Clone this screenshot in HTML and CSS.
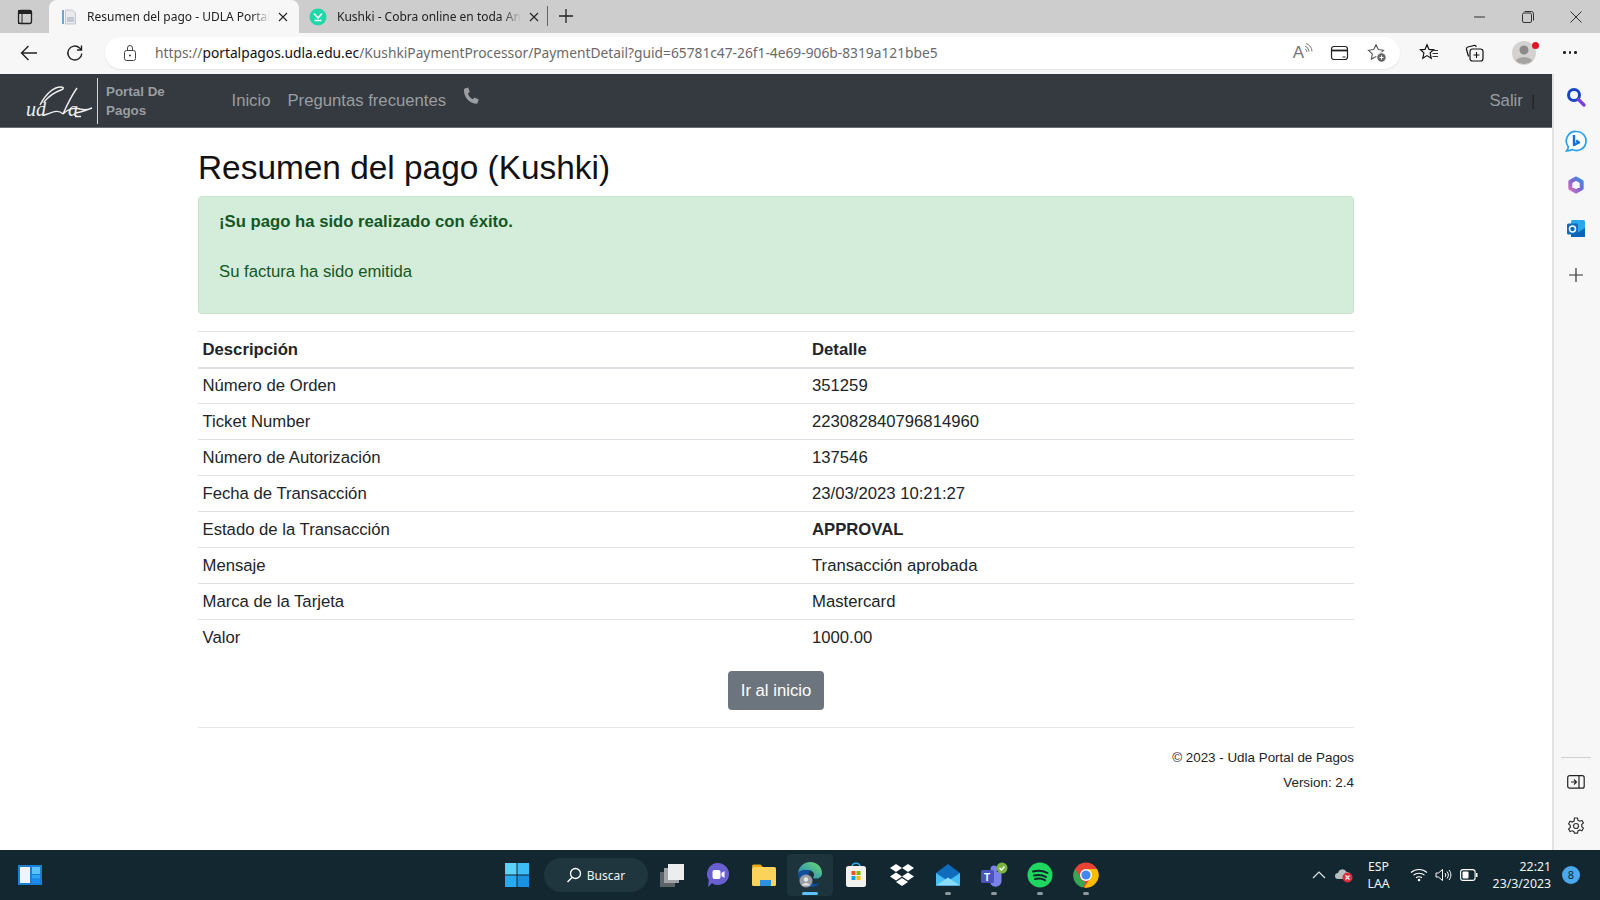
FILE: index.html
```html
<!DOCTYPE html>
<html lang="es">
<head>
    <meta charset="UTF-8">
    <title>Resumen del pago - UDLA Portal de Pagos</title>
    <link rel="stylesheet" href="styles.css">
</head>
<body>
    <!-- browser tabs -->
    <div class="tabstrip">
        <div class="tab-toggle">
            <svg width="16" height="16" viewBox="0 0 16 16"><rect x="1.500" y="1.500" width="13" height="13" rx="2" fill="none" stroke="#222" stroke-width="1.300"/><rect x="1.500" y="1.500" width="13" height="3.500" fill="#222"/><rect x="1.500" y="1.500" width="3.500" height="13" fill="none" stroke="#222" stroke-width="1"/></svg>
        </div>
        <div class="tab tab-active">
            <svg class="favicon" width="16" height="16" viewBox="0 0 16 16"><rect x="1" y="1" width="2" height="14" fill="#6aa6d8"/><path d="M4.500 1h7l3 3v11h-10z" fill="#e9e9ee" stroke="#b9bcc6" stroke-width=".8"/><rect x="6" y="8" width="7" height="5" fill="#c4c8d2"/></svg>
            <span class="tab-title">Resumen del pago - UDLA Portal</span>
            <svg class="tab-close" width="10" height="10" viewBox="0 0 10 10"><path d="M1 1l8 8M9 1l-8 8" stroke="#222" stroke-width="1.100"/></svg>
        </div>
        <div class="tab">
            <svg class="favicon" width="18" height="18" viewBox="0 0 18 18"><circle cx="9" cy="9" r="8.500" fill="#1ed8a8"/><path d="M5 5.500L9 10l4-4.500M5.500 12.500h7" fill="none" stroke="#fff" stroke-width="1.600"/></svg>
            <span class="tab-title">Kushki - Cobra online en toda An</span>
            <svg class="tab-close" width="10" height="10" viewBox="0 0 10 10"><path d="M1 1l8 8M9 1l-8 8" stroke="#222" stroke-width="1.100"/></svg>
        </div>
        <div class="tab-sep"></div>
        <svg class="tab-new" width="16" height="16" viewBox="0 0 16 16"><path d="M8 1v14M1 8h14" stroke="#222" stroke-width="1.300"/></svg>
        <div class="window-btns">
            <svg width="12" height="12" viewBox="0 0 12 12"><path d="M0 6h11" stroke="#333" stroke-width="1"/></svg>
            <svg width="12" height="12" viewBox="0 0 12 12"><rect x=".5" y="2" width="9" height="9.500" rx="1.500" fill="none" stroke="#333"/><path d="M2.500 .5h7a2 2 0 0 1 2 2v7" fill="none" stroke="#333"/></svg>
            <svg width="12" height="12" viewBox="0 0 12 12"><path d="M.5 .5l11 11M11.500 .5l-11 11" stroke="#333" stroke-width="1"/></svg>
        </div>
    </div>

    <!-- address bar -->
    <div class="toolbar">
        <svg class="tool-back" width="20" height="20" viewBox="0 0 20 20"><path d="M18 10H2.500M9.500 3l-7 7 7 7" fill="none" stroke="#222" stroke-width="1.400"/></svg>
        <svg class="tool-reload" width="20" height="20" viewBox="0 0 20 20"><path d="M16.800 10.500a7 7 0 1 1-2.200-5.600L16.500 7M16.500 2.500V7H12" fill="none" stroke="#222" stroke-width="1.400"/></svg>
        <div class="address">
            <svg class="lock" width="16" height="18" viewBox="0 0 16 18"><rect x="2.500" y="6.500" width="11" height="10" rx="2" fill="none" stroke="#444"/><path d="M5.500 6.500V4a2.500 2.500 0 0 1 5 0v2.500" fill="none" stroke="#444"/><circle cx="8" cy="11.500" r="1" fill="#444"/></svg>
            <span class="url">https://<b>portalpagos.udla.edu.ec</b>/KushkiPaymentProcessor/PaymentDetail?guid=65781c47-26f1-4e69-906b-8319a121bbe5</span>
            <div class="address-icons">
                <span class="read-aloud">A<svg width="9" height="12" viewBox="0 0 9 12"><path d="M1 6a3 3 0 0 1 2 3M1 3a6 6 0 0 1 4 5.500M2 .5a9 9 0 0 1 6 8" fill="none" stroke="#777"/></svg></span>
                <svg width="20" height="16" viewBox="0 0 20 16"><rect x="1.500" y="1.500" width="16" height="13" rx="2.500" fill="none" stroke="#222" stroke-width="1.200"/><path d="M1.500 5.500h16" stroke="#222" stroke-width="1.800"/><path d="M12.500 12h3" stroke="#222"/></svg>
                <svg width="20" height="20" viewBox="0 0 20 20"><path d="M9 1.800l2.300 4.800 5.200.7-3.800 3.600.9 5.200L9 13.600l-4.600 2.500.9-5.200L1.500 7.300l5.200-.7z" fill="none" stroke="#555" stroke-width="1.100"/><circle cx="14.500" cy="14.500" r="5.200" fill="#fff"/><circle cx="14.500" cy="14.500" r="4.200" fill="#666"/><path d="M14.500 12.500v4M12.500 14.500h4" stroke="#fff"/></svg>
            </div>
        </div>
        <div class="tool-icons">
            <svg width="20" height="20" viewBox="0 0 20 20"><path d="M8 1.800l2 4.600 4.600.4-3.500 3.100 1.100 5.300L8 12.600l-4.200 2.600 1.100-5.300L1.400 6.800 6 6.400z" fill="none" stroke="#111" stroke-width="1.200"/><path d="M13.500 7.500H19M13.500 10.500H19M13.500 13.500H19" stroke="#333"/></svg>
            <svg width="20" height="20" viewBox="0 0 20 20"><path d="M3.500 13.500L1.500 6.500a2 2 0 0 1 1.400-2.500l6-1.500a2 2 0 0 1 2.400 1.400" fill="none" stroke="#111" stroke-width="1.200"/><rect x="5" y="6" width="13" height="12" rx="2.500" fill="none" stroke="#111" stroke-width="1.200"/><path d="M11.500 9v6M8.500 12h6" stroke="#111" stroke-width="1.100"/></svg>
            <div class="profile">
                <svg width="24" height="24" viewBox="0 0 24 24"><circle cx="12" cy="12" r="12" fill="#d3d2d0"/><circle cx="12" cy="9" r="4.500" fill="#8c8a88"/><path d="M4 20c1-5 15-5 16 0a12 12 0 0 1-16 0z" fill="#a5a3a1"/></svg>
                <span class="profile-dot"></span>
            </div>
            <span class="more-dots"><i></i><i></i><i></i></span>
        </div>
    </div>

    <div class="window">
        <div class="page">
            <nav class="navbar">
                <a class="brand">
                    <svg class="brand-logo" width="68" height="36" viewBox="0 0 68 36">
                        <text x="1" y="33" class="brand-script">ud</text>
                        <text x="43" y="33" class="brand-script">a</text>
                        <path d="M15 22C20 12 28 4 36 4c3 0 3 2 0 3-6 2-12 6-17 12M38 31C42 22 47 12 52 5M19 32c6-1 13-7 19-1M38 31c4-5 12-7 17-5 4 1 8 1 12-1-5 2-10 4-16 5M50 33.500h6" fill="none" stroke="#eeeeee" stroke-width="1.400"/>
                    </svg>
                    <span class="brand-text">Portal De<br>Pagos</span>
                </a>
                <a class="nav-link">Inicio</a>
                <a class="nav-link">Preguntas frecuentes</a>
                <svg class="nav-phone" width="20" height="20" viewBox="0 0 20 20"><path d="M4.500 1.200l2.700-.700 1.600 4.300-1.900 1.600c.8 2.500 2.500 4.600 4.900 5.900l1.800-1.800 4.100 2-.9 3c-.3.900-1 1.300-1.900 1.200C8 16.200 2.800 10 2.900 3.100c0-.9.600-1.600 1.600-1.900z" fill="#9a9da1"/></svg>
                <a class="nav-link nav-right">Salir</a>
                <span class="nav-bar-sep">|</span>
            </nav>

            <main class="container">
                <h1>Resumen del pago (Kushki)</h1>
                <div class="alert">
                    <p class="alert-title">¡Su pago ha sido realizado con éxito.</p>
                    <p>Su factura ha sido emitida</p>
                </div>
                <table class="detail">
                    <thead>
                        <tr><th class="col-desc">Descripción</th><th>Detalle</th></tr>
                    </thead>
                    <tbody>
                        <tr><td>Número de Orden</td><td>351259</td></tr>
                        <tr><td>Ticket Number</td><td>223082840796814960</td></tr>
                        <tr><td>Número de Autorización</td><td>137546</td></tr>
                        <tr><td>Fecha de Transacción</td><td>23/03/2023 10:21:27</td></tr>
                        <tr><td>Estado de la Transacción</td><td><b>APPROVAL</b></td></tr>
                        <tr><td>Mensaje</td><td>Transacción aprobada</td></tr>
                        <tr><td>Marca de la Tarjeta</td><td>Mastercard</td></tr>
                        <tr><td>Valor</td><td>1000.00</td></tr>
                    </tbody>
                </table>
                <div class="actions"><a class="btn">Ir al inicio</a></div>
                <footer class="footer">
                    <p>© 2023 - Udla Portal de Pagos</p>
                    <p>Version: 2.4</p>
                </footer>
            </main>
        </div>

        <!-- edge sidebar -->
        <aside class="sidebar">
            <div class="side-icon"><svg width="20" height="20" viewBox="0 0 20 20"><circle cx="8" cy="8" r="5.500" fill="none" stroke="#1746c4" stroke-width="3"/><path d="M12.500 12.500l5.500 5.500" stroke="#7a3fe0" stroke-width="3.200" stroke-linecap="round"/></svg></div>
            <div class="side-icon"><svg width="22" height="22" viewBox="0 0 22 22"><path d="M11.500 1.500a9.500 9.500 0 1 1-4 18.100c-1.800.9-3.700 1.200-5.800 1.200.9-1 1.500-2.400 1.600-4.100A9.500 9.500 0 0 1 11.500 1.500z" fill="#fff" stroke="#2a9fe8" stroke-width="1.700"/><path d="M9 5v10l5-2.500-2.800-2" fill="none" stroke="#1570d6" stroke-width="2.400" stroke-linejoin="round"/></svg></div>
            <div class="side-icon"><svg width="20" height="20" viewBox="0 0 20 20"><defs><linearGradient id="officeRing" x1="1" y1="0" x2="0" y2="1"><stop offset="0" stop-color="#3f8fe0"/><stop offset=".5" stop-color="#7c66d8"/><stop offset="1" stop-color="#d86fc0"/></linearGradient></defs><path d="M10 3.500l5.700 3.300v6.400L10 16.500l-5.700-3.300V6.800z" fill="none" stroke="url(#officeRing)" stroke-width="4" stroke-linejoin="round"/></svg></div>
            <div class="side-icon"><svg width="20" height="20" viewBox="0 0 20 20"><rect x="5" y="1" width="14" height="17" rx="1.500" fill="#28a8ea"/><path d="M5 9l7 4.500L19 9v9H5z" fill="#0a64b8"/><rect x="1" y="4.500" width="11" height="11" rx="1.500" fill="#0f6cbd"/><circle cx="6.500" cy="10" r="3" fill="none" stroke="#fff" stroke-width="1.500"/></svg></div>
            <div class="side-icon side-add"><svg width="14" height="14" viewBox="0 0 14 14"><path d="M7 0v14M0 7h14" stroke="#333" stroke-width="1.200"/></svg></div>
            <div class="sidebar-bottom">
                <div class="sidebar-rule"></div>
                <div class="side-icon"><svg width="18" height="14" viewBox="0 0 18 14"><rect x=".7" y=".7" width="16.500" height="12.500" rx="2" fill="none" stroke="#222" stroke-width="1.200"/><path d="M12 1v12" stroke="#222" stroke-width="1.200"/><path d="M4 7h5M7 4.500L9.500 7 7 9.500" fill="none" stroke="#222" stroke-width="1.100"/></svg></div>
                <div class="side-icon"><svg width="18" height="18" viewBox="0 0 18 18"><circle cx="9" cy="9" r="2.500" fill="none" stroke="#333" stroke-width="1.200"/><path d="M7.500 1h3l.5 2.300 1.700.9 2.200-.8 1.500 2.600-1.700 1.600v2l1.700 1.600-1.500 2.600-2.200-.8-1.700.9-.5 2.300h-3L7 14.700l-1.700-.9-2.200.8-1.500-2.600 1.700-1.600v-2L1.600 6.800l1.500-2.600 2.200.8L7 4.100z" fill="none" stroke="#333" stroke-width="1.200"/></svg></div>
            </div>
        </aside>
    </div>

    <!-- windows taskbar -->
    <div class="taskbar">
        <div class="task-left">
            <svg width="26" height="22" viewBox="0 0 26 22"><rect x="1" y="1" width="24" height="20" fill="#1a7fd6"/><rect x="3" y="3" width="10" height="16" fill="#f0f4fa"/><rect x="15" y="3" width="8" height="7" fill="#5cc1ff"/><rect x="15" y="11" width="8" height="3.500" fill="#2ea2f5"/><rect x="15" y="15.500" width="8" height="3.500" fill="#1a8cf0"/></svg>
        </div>
        <div class="task-center">
            <div class="task-icon"><svg width="24" height="24" viewBox="0 0 24 24"><rect x="0" y="0" width="11.500" height="11.500" fill="#5fd0f8"/><rect x="12.500" y="0" width="11.500" height="11.500" fill="#3dbdf5"/><rect x="0" y="12.500" width="11.500" height="11.500" fill="#2ba8ee"/><rect x="12.500" y="12.500" width="11.500" height="11.500" fill="#1a90e0"/></svg></div>
            <div class="task-search">
                <svg width="16" height="16" viewBox="0 0 16 16"><circle cx="9.500" cy="6.500" r="5" fill="none" stroke="#fff" stroke-width="1.300"/><path d="M6 10.500L1.500 15" stroke="#fff" stroke-width="1.500"/></svg>
                Buscar
            </div>
            <div class="task-icon"><svg width="26" height="26" viewBox="0 0 26 26"><rect x="1" y="10" width="15" height="15" fill="#5d6468"/><rect x="5" y="6" width="15" height="15" fill="#9fa3a6"/><rect x="9" y="2" width="16" height="16" fill="#eceded"/></svg></div>
            <div class="task-icon"><svg width="24" height="26" viewBox="0 0 24 26"><path d="M12 1a11 11 0 1 1-6 20.200L2 25l.8-7A11 11 0 0 1 12 1z" fill="#6a5fd0"/><rect x="6.500" y="8" width="8" height="9" rx="2" fill="#fff"/><path d="M15.500 11l3-2v7l-3-2z" fill="#fff"/></svg></div>
            <div class="task-icon"><svg width="26" height="24" viewBox="0 0 26 24"><path d="M1 3a1.500 1.500 0 0 1 1.500-1.500h7l3 3H1z" fill="#e8a818"/><rect x="1" y="4" width="24" height="19" rx="1.500" fill="#fcd35a"/><rect x="9" y="17" width="11" height="6" fill="#2d8fe0"/></svg></div>
            <div class="task-icon task-active">
                <svg width="26" height="28" viewBox="0 0 26 28"><defs><linearGradient id="edgeTop" x1="0" y1="1" x2="1" y2="0"><stop offset="0" stop-color="#1a7fd0"/><stop offset="1" stop-color="#6fdc6a"/></linearGradient></defs><path d="M1 12C2 5 7 1 13.500 1 20 1 25 6 25 12c0 4-3 5.500-6 5.500-2 0-3-.5-3-1 2-1.500 1.500-6-3-7C8 8.500 3 9.500 1 12z" fill="url(#edgeTop)"/><path d="M1 12c0 8 5 14 13 14 4 0 7-2 9-4-5 2-12 1-12-5 0-3 1-6 3-7.500C9 8.500 3 9.500 1 12z" fill="#0f4f9e"/><circle cx="9" cy="20" r="6.500" fill="#9a9ea4"/><circle cx="9" cy="18.500" r="2.200" fill="#e4e4e4"/><path d="M5 24.500c.5-3.500 7.500-3.500 8 0z" fill="#e4e4e4"/></svg>
                <span class="task-underline"></span>
            </div>
            <div class="task-icon"><svg width="22" height="26" viewBox="0 0 22 26"><path d="M7 5c0-5 8-5 8 0" fill="none" stroke="#2ba8ee" stroke-width="1.500"/><rect x="1" y="4" width="20" height="21" rx="2.500" fill="#f4f2ee"/><rect x="6.500" y="9" width="4" height="4" fill="#f25022"/><rect x="11.500" y="9" width="4" height="4" fill="#7fba00"/><rect x="6.500" y="14" width="4" height="4" fill="#00a4ef"/><rect x="11.500" y="14" width="4" height="4" fill="#ffb900"/></svg></div>
            <div class="task-icon"><svg width="26" height="24" viewBox="0 0 26 24"><path d="M7 1l6 4-6 4-6-4zM19 1l6 4-6 4-6-4zM7 9.500l6 4-6 4-6-4zM19 9.500l6 4-6 4-6-4zM7 19l6-4 6 4-6 4z" fill="#fff"/></svg></div>
            <div class="task-icon"><svg width="26" height="24" viewBox="0 0 26 24"><path d="M13 1l12 9v12.500H1V10z" fill="#0f6cbd"/><path d="M1 10l12 8 12-8v12.500H1z" fill="#47bdf5"/><path d="M1 22.500l12-8 12 8z" fill="#8adcfb"/></svg><span class="task-pip"></span></div>
            <div class="task-icon"><svg width="28" height="26" viewBox="0 0 28 26"><circle cx="14" cy="7" r="3.500" fill="#7b83eb"/><path d="M11 10h9a1.500 1.500 0 0 1 1.500 1.500V19a6 6 0 0 1-11 3z" fill="#7b83eb"/><rect x="1" y="8" width="13" height="13" rx="1.500" fill="#4b53bc"/><text x="4" y="18.500" class="teams-t">T</text><circle cx="22" cy="6" r="5.500" fill="#7cb342"/><path d="M19.500 6l2 2 3-3.500" fill="none" stroke="#fff" stroke-width="1.300"/></svg><span class="task-pip"></span></div>
            <div class="task-icon"><svg width="26" height="26" viewBox="0 0 26 26"><circle cx="13" cy="13" r="12.500" fill="#1ed760"/><path d="M6 9.500c5-1.500 10-1 14.500 1.500M7 13.500c4-1 8.500-.7 12 1.500M8 17c3.500-.7 7-.5 10 1.200" fill="none" stroke="#10262c" stroke-width="2" stroke-linecap="round"/></svg><span class="task-pip"></span></div>
            <div class="task-icon"><svg width="26" height="26" viewBox="0 0 26 26"><circle cx="13" cy="13" r="12.500" fill="#ea4335"/><path d="M2.200 6.700L8 17a6 6 0 0 0 5 3l-3.500 5.500A12.500 12.500 0 0 1 2.200 6.700z" fill="#34a853"/><path d="M13 7h11a12.500 12.500 0 0 1-13 18.500L17.500 16a6 6 0 0 0-4.500-9z" fill="#fbbc04"/><circle cx="13" cy="13" r="6" fill="#fff"/><circle cx="13" cy="13" r="4.600" fill="#4285f4"/></svg><span class="task-pip"></span></div>
        </div>
        <div class="task-tray">
            <svg width="14" height="8" viewBox="0 0 14 8"><path d="M1 7l6-6 6 6" fill="none" stroke="#dfe5e7" stroke-width="1.200"/></svg>
            <svg class="tray-cloud" width="18" height="16" viewBox="0 0 18 16"><path d="M3 12a3 3 0 0 1 0-6 4.500 4.500 0 0 1 8.500-1A3.500 3.500 0 0 1 12 12z" fill="#b9bec1"/><circle cx="12.500" cy="10.500" r="5" fill="#d9303c"/><path d="M10.500 8.500l4 4M14.500 8.500l-4 4" stroke="#fff" stroke-width="1.100"/></svg>
            <div class="tray-lang">ESP<br>LAA</div>
            <svg width="18" height="14" viewBox="0 0 18 14"><path d="M1 4.500c4.500-4 11.500-4 16 0M3.500 7.200c3-2.600 8-2.600 11 0M6 9.800c1.600-1.300 4.400-1.300 6 0" fill="none" stroke="#fff" stroke-width="1.100"/><circle cx="9" cy="12" r="1.300" fill="#fff"/></svg>
            <svg width="18" height="14" viewBox="0 0 18 14"><path d="M1 5v4h2.500L7.500 12.500V1.500L3.500 5z" fill="none" stroke="#fff" stroke-width="1"/><path d="M10 5c1 1 1 3 0 4M12 3.500c1.800 2 1.800 5 0 7M14 2c2.500 3 2.500 7 0 10" fill="none" stroke="#fff"/></svg>
            <svg width="18" height="12" viewBox="0 0 18 12"><rect x=".6" y=".6" width="14.500" height="10.800" rx="2.500" fill="none" stroke="#fff" stroke-width="1.100"/><rect x="2.500" y="2.500" width="6" height="7" rx="1" fill="#fff"/><rect x="16" y="4" width="1.500" height="4" fill="#fff"/></svg>
            <div class="tray-clock">22:21<br>23/3/2023</div>
            <span class="tray-badge">8</span>
        </div>
    </div>
</body>
</html>
```

FILE: styles.css
```css
* {
    box-sizing: border-box;
}
html, body {
    height: 100%;
}
body {
    margin: 0;
    display: flex;
    flex-direction: column;
    height: 900px;
    overflow: hidden;
    font-family: "Liberation Sans", Arial, sans-serif;
    color: #212529;
    background: #fff;
}
svg {
    flex: none;
    display: block;
}

/* browser tabs */
.tabstrip {
    height: 33px;
    display: flex;
    align-items: flex-end;
    background: #cdcdcd;
    font-family: "Noto Sans", sans-serif;
    font-size: 12px;
    color: #222;
}
.tab-toggle {
    width: 49px;
    height: 33px;
    display: flex;
    align-items: center;
    justify-content: center;
}
.tab {
    width: 250px;
    height: 33px;
    display: flex;
    align-items: center;
    padding: 0 11px 0 10px;
}
.tab-active {
    background: #f7f7f7;
    border-radius: 8px 8px 0 0;
    padding-left: 12px;
}
.tab .favicon {
    margin-right: 10px;
}
.tab-title {
    flex: 1;
    white-space: nowrap;
    -webkit-mask-image: linear-gradient(to right, #000 90%, transparent);
    mask-image: linear-gradient(to right, #000 90%, transparent);
}
.tab-close {
    margin-left: 8px;
}
.tab-sep {
    width: 1px;
    height: 20px;
    margin: 0 10px 7px -2px;
    background: #666;
}
.tab-new {
    margin-bottom: 9px;
}
.window-btns {
    margin-left: auto;
    height: 33px;
    display: flex;
    align-items: center;
    gap: 36px;
    padding-right: 18px;
}

/* address bar */
.toolbar {
    height: 41px;
    display: flex;
    align-items: center;
    padding-bottom: 2px;
    background: #f7f7f7;
}
.tool-back {
    margin-left: 19px;
}
.tool-reload {
    margin-left: 26px;
}
.address {
    margin-left: 20px;
    width: 1295px;
    height: 32px;
    display: flex;
    align-items: center;
    padding: 0 13px 0 17px;
    background: #fff;
    border-radius: 16px;
    box-shadow: 0 1px 2px rgba(0, 0, 0, 0.08);
}
.url {
    margin-left: 17px;
    font-family: "Noto Sans", sans-serif;
    font-size: 13.77px;
    color: #6a6a6a;
    white-space: nowrap;
}
.url b {
    font-weight: 400;
    color: #111;
}
.address-icons {
    margin-left: auto;
    display: flex;
    align-items: center;
    gap: 17px;
}
.read-aloud {
    display: flex;
    align-items: flex-start;
    font-size: 17px;
    color: #777;
}
.tool-icons {
    flex: 1;
    display: flex;
    align-items: center;
    gap: 26px;
    padding-left: 19px;
}
.profile {
    position: relative;
    margin-left: 1px;
}
.profile-dot {
    position: absolute;
    top: 1px;
    right: -3px;
    width: 7px;
    height: 7px;
    border-radius: 50%;
    background: #e81123;
}
.more-dots {
    display: flex;
    gap: 3px;
    margin-left: 1px;
}
.more-dots i {
    width: 2.5px;
    height: 2.5px;
    border-radius: 50%;
    background: #222;
}

/* page area */
.window {
    flex: 1;
    display: flex;
    min-height: 0;
}
.page {
    flex: 1;
    min-width: 0;
}
.navbar {
    height: 54px;
    display: flex;
    align-items: center;
    padding: 0 17px 0 25px;
    background: #343a40;
    border-bottom: 1px solid #6b6f73;
    font-size: 16.7px;
}
.brand {
    display: flex;
    align-items: center;
    width: 198px;
}
.brand-logo {
    margin-right: 4px;
}
.brand-script {
    font-family: "Liberation Serif", serif;
    font-style: italic;
    font-size: 20px;
    fill: #eeeeee;
}
.brand-text {
    padding: 4px 0 4px 8px;
    border-left: 1px solid #d8d8d8;
    font-size: 13.4px;
    font-weight: 700;
    line-height: 19px;
    color: #9a9da1;
}
.nav-link {
    padding: 0 8.5px;
    color: #9a9da1;
}
.nav-phone {
    margin: -8px 0 0 6px;
}
.nav-right {
    margin-left: auto;
}
.nav-bar-sep {
    font-size: 14px;
    color: #1d2124;
}
.container {
    width: 1156px;
    margin: 0 auto;
}
h1 {
    margin: 19px 0 7px;
    font-size: 33.4px;
    font-weight: 400;
    line-height: 42px;
    color: #111;
}
.alert {
    height: 118px;
    padding: 14px 20px;
    background: #d4edda;
    border: 1px solid #c3e6cb;
    border-radius: 4px;
    font-size: 16.7px;
    color: #155724;
}
.alert p {
    margin: 0 0 29px;
    line-height: 21px;
}
.alert-title {
    font-weight: 700;
}
.detail {
    width: 100%;
    margin-top: 17px;
    border-collapse: collapse;
    font-size: 16.7px;
}
.detail th, .detail td {
    height: 36px;
    padding: 0 4.5px;
    text-align: left;
    border-top: 1px solid #dee2e6;
}
.detail thead th {
    border-bottom: 2px solid #dee2e6;
    padding-top: 1px;
}
.col-desc {
    width: 609.5px;
}
.actions {
    display: flex;
    justify-content: center;
    margin-top: 15px;
    padding-bottom: 17px;
    border-bottom: 1px solid #e6e8ea;
}
.btn {
    padding: 9px 13px;
    background: #6c757d;
    border-radius: 4px;
    font-size: 16.7px;
    line-height: 21px;
    color: #fff;
}
.footer {
    padding-top: 21.5px;
    text-align: right;
    font-size: 13.4px;
    color: #212529;
}
.footer p {
    margin: 0 0 8px;
    line-height: 17px;
}

/* edge sidebar */
.sidebar {
    width: 48px;
    display: flex;
    flex-direction: column;
    align-items: center;
    padding: 1px 2px 0 0;
    background: #f7f7f7;
    border-left: 2px solid #e3e3e3;
}
.side-icon {
    height: 44px;
    display: flex;
    align-items: center;
    justify-content: center;
}
.side-add {
    margin-top: 2px;
}
.sidebar-bottom {
    margin-top: auto;
    display: flex;
    flex-direction: column;
    align-items: center;
    padding-bottom: 2px;
}
.sidebar-rule {
    width: 30px;
    height: 1px;
    margin-bottom: 2px;
    background: #cfcfcf;
}

/* windows taskbar */
.taskbar {
    height: 50px;
    display: grid;
    grid-template-columns: 1fr auto 1fr;
    align-items: center;
    background: #12272f;
    font-family: "Noto Sans", sans-serif;
    color: #f2f5f6;
}
.task-left {
    padding-left: 17px;
}
.task-center {
    display: flex;
    align-items: center;
    height: 50px;
    margin-left: 2px;
}
.task-icon {
    position: relative;
    width: 46px;
    height: 42px;
    display: flex;
    align-items: center;
    justify-content: center;
    border-radius: 4px;
}
.task-active {
    background: #1d343c;
}
.task-underline {
    position: absolute;
    left: 15px;
    bottom: 1px;
    width: 16px;
    height: 3px;
    border-radius: 2px;
    background: #5cc1ff;
}
.task-pip {
    position: absolute;
    left: 20px;
    bottom: 1px;
    width: 6px;
    height: 3px;
    border-radius: 2px;
    background: #8d9aa0;
}
.teams-t {
    font-family: "Liberation Sans", sans-serif;
    font-size: 10px;
    font-weight: 700;
    fill: #fff;
}
.task-search {
    width: 104px;
    height: 34px;
    display: flex;
    align-items: center;
    justify-content: center;
    gap: 5px;
    margin: 0 1px 0 4px;
    background: #1f363e;
    border-radius: 17px;
    font-size: 12px;
}
.task-tray {
    display: flex;
    align-items: center;
    justify-content: flex-end;
    gap: 7px;
    padding-right: 20px;
    font-size: 12.3px;
    line-height: 17px;
}
.tray-cloud {
    margin-left: 2px;
}
.tray-lang {
    margin: 0 13px 0 7px;
    text-align: center;
}
.tray-clock {
    margin-left: 8px;
    text-align: right;
}
.tray-badge {
    width: 18px;
    height: 18px;
    margin-left: 4px;
    border-radius: 50%;
    background: #4aa9ec;
    font-size: 11px;
    line-height: 18px;
    text-align: center;
    color: #0e2a38;
}
```
